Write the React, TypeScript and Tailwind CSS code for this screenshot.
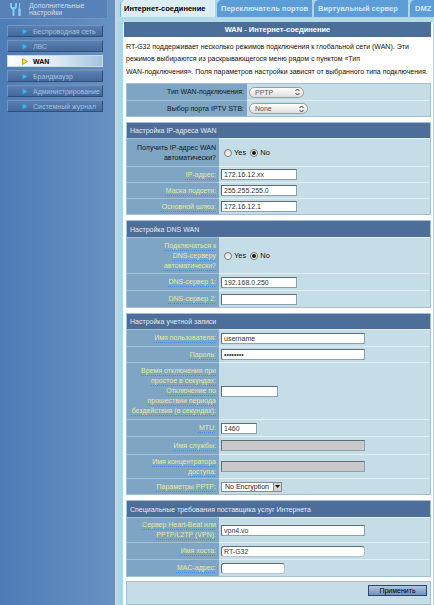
import React from 'react';

type RowProps = {
  label: React.ReactNode;
  h: string;
  lw?: string;
  tip?: boolean;
  first?: boolean;
  children?: React.ReactNode;
};

const Tip = ({ children }: { children: React.ReactNode }) => (
  <span className="text-[#e6eaa2] underline decoration-dotted decoration-[#3d8fe2] underline-offset-[2px]">
    {children}
  </span>
);

const Row = ({ label, h, lw = 'w-[92px]', tip = true, first = false, children }: RowProps) => (
  <div className={`flex ${h}`}>
    <div
      className={`${lw} shrink-0 flex items-center justify-end pr-[3px] text-right leading-[10px] bg-[#7ea5c3] ${
        first ? '' : 'border-t border-[#a3c1d6]'
      } ${tip ? '' : 'text-[#101820]'}`}
    >
      {tip ? <Tip>{label}</Tip> : <span>{label}</span>}
    </div>
    <div
      className={`flex-1 flex items-center pl-[2px] bg-[#c4dde6] ${first ? '' : 'border-t border-[#e3eff3]'}`}
    >
      {children}
    </div>
  </div>
);

const Section = ({ title, h, children }: { title: string; h: string; children: React.ReactNode }) => (
  <div className="mt-[5px] border border-[#a2bfd3]">
    <div className={`${h} flex items-center pl-[3px] bg-[#4c6e98] text-[#e4ebf3]`}>{title}</div>
    {children}
  </div>
);

const Field = ({ w, value, tone = 'white', round = false }: { w: string; value?: string; tone?: 'white' | 'grey'; round?: boolean }) => (
  <div
    className={`${w} h-[11px] flex items-center pl-[2px] border border-[#8d9fb0] border-t-[#5d6b7a] border-l-[#5d6b7a] text-[#333] ${
      tone === 'grey' ? 'bg-[#c9c9c9]' : 'bg-white'
    } ${round ? 'rounded-[3px] border-[#b6c2cc]' : ''}`}
  >
    {value}
  </div>
);

const Radio = ({ checked, label }: { checked?: boolean; label: string }) => (
  <span className="flex items-center gap-[2px] text-[#111]">
    <span className="w-[8px] h-[8px] rounded-full border border-[#7b7b7b] bg-linear-to-b from-[#d8d8d8] to-white flex items-center justify-center">
      {checked && <span className="w-[4px] h-[4px] rounded-full bg-[#1a1a1a]" />}
    </span>
    <span className="text-[7.5px]">{label}</span>
  </span>
);

const Pill = ({ w, value }: { w: string; value: string }) => (
  <div
    className={`${w} h-[11px] flex items-center justify-between pl-[5px] pr-[3px] rounded-full border border-[#9c9c9c] bg-linear-to-b from-white to-[#dedede] text-[#555]`}
  >
    <span>{value}</span>
    <svg width="5" height="8" viewBox="0 0 5 8">
      <path d="M0.5 3 L2.5 1 L4.5 3 M0.5 5 L2.5 7 L4.5 5" fill="none" stroke="#333" strokeWidth="1" />
    </svg>
  </div>
);

const Arrow = ({ active }: { active?: boolean }) => (
  <svg width="6" height="7" viewBox="0 0 6 7" className="shrink-0">
    <path
      d="M0.5 0.5 L5.5 3.5 L0.5 6.5 Z"
      fill={active ? '#f6e41e' : '#3fb4ee'}
      stroke={active ? '#8a7b10' : '#2b8fc9'}
      strokeWidth="0.6"
    />
  </svg>
);

const menu = ['Беспроводная сеть', 'ЛВС', 'WAN', 'Брандмауэр', 'Администрирование', 'Системный журнал'];

export default function App() {
  return (
    <div className="w-[434px] h-[605px] overflow-hidden flex font-['Liberation_Sans',Arial,sans-serif] text-[7px] leading-[9px]">
      {/* sidebar */}
      <aside className="w-[115px] shrink-0 bg-linear-to-r from-[#4d7cb7] to-[#6891c2]">
        <div className="w-[108px] h-[19px] flex items-center gap-[6px] pl-[9px] bg-[#5781b7] border-r border-b border-[#7294c2]">
          <svg width="14" height="14" viewBox="0 0 14 14">
            <path d="M2 1 L2 4 Q2 6.5 4.5 6.5 Q7 6.5 7 4 L7 1" fill="none" stroke="#86d2f5" strokeWidth="1.7" />
            <path d="M4.5 6 L4.5 13" stroke="#86d2f5" strokeWidth="2" strokeLinecap="round" />
            <path d="M10.5 1 L10.5 7" stroke="#86d2f5" strokeWidth="1" />
            <path d="M10.5 7.5 L10.5 13" stroke="#86d2f5" strokeWidth="2.4" strokeLinecap="round" />
          </svg>
          <div className="text-[#d3deeb] leading-[7px]">
            Дополнительные
            <br />
            настройки
          </div>
        </div>
        <nav className="mt-[6px] ml-[7px] w-[96px] flex flex-col gap-[3px]">
          {menu.map((item) =>
            item === 'WAN' ? (
              <div
                key={item}
                className="h-[12px] flex items-center gap-[5px] pl-[14px] bg-linear-to-r from-[#fbfdff] via-[#e2ecf5] to-[#a3c4df] border border-[#c9d9e8]"
              >
                <Arrow active />
                <span className="font-bold text-black">WAN</span>
              </div>
            ) : (
              <div
                key={item}
                className="h-[12px] flex items-center gap-[5px] pl-[14px] bg-linear-to-b from-[#5a7fb0] to-[#44699c] border border-[#2f4e7a] border-t-[#7393c0] border-l-[#7393c0]"
              >
                <Arrow />
                <span className="text-[#a9c1dc]">{item}</span>
              </div>
            )
          )}
        </nav>
      </aside>

      {/* main */}
      <main className="flex-1 flex flex-col bg-[#acd5e7] border-l-2 border-[#c9d7e3]">
        <div className="h-[18px] flex items-end gap-[2px] pl-[3px] bg-[#acd5e7] text-[7.5px] font-bold">
          <div className="w-[95px] h-[17px] flex items-center pl-[3px] rounded-tl-[5px] bg-[#dcedf3] border-l border-[#7fb0d0] text-black">
            Интернет-соединение
          </div>
          <div className="w-[95px] h-[17px] flex items-center pl-[4px] rounded-tl-[5px] bg-[#5d9dd7] text-[#d5e7f6]">
            Переключатель портов
          </div>
          <div className="w-[94px] h-[17px] flex items-center pl-[4px] rounded-tl-[5px] bg-[#5d9dd7] text-[#d5e7f6]">
            Виртуальный сервер
          </div>
          <div className="flex-1 h-[17px] flex items-center pl-[5px] rounded-tl-[5px] bg-[#5d9dd7] text-[#d5e7f6]">
            DMZ
          </div>
        </div>
        <div className="h-[10px] bg-[#b3dae8]" />
        <div className="flex-1 ml-[6px] mr-[1px] bg-white pl-[3px] pr-[2px]">
          <div className="-ml-[2px] h-[15px] flex items-center justify-center bg-[#4b6e98] text-white font-bold text-[7.5px]">
            WAN - Интернет-соединение
          </div>
          <p className="pt-[4px] leading-[12.5px] text-[#111]">
            RT-G32 поддерживает несколько режимов подключения к глобальной сети (WAN). Эти
            <br />
            режимов выбираются из раскрывающегося меню рядом с пунктом «Тип
            <br />
            WAN-подключения». Поля параметров настройки зависят от выбранного типа подключения.
          </p>

          <div className="mt-[5px] border border-[#a2bfd3]">
            <Row label="Тип WAN-подключения:" h="h-[16px]" lw="w-[120px]" tip={false} first>
              <Pill w="w-[55px]" value="PPTP" />
            </Row>
            <Row label="Выбор порта IPTV STB:" h="h-[16px]" lw="w-[120px]" tip={false}>
              <Pill w="w-[59px]" value="None" />
            </Row>
          </div>

          <Section title="Настройка IP-адреса WAN" h="h-[15px]">
            <Row label={<>Получить IP-адрес WAN<br />автоматически?</>} h="h-[28px]" tip={false}>
              <div className="flex items-center gap-[4px] pl-[3px]">
                <Radio label="Yes" />
                <Radio label="No" checked />
              </div>
            </Row>
            <Row label="IP-адрес:" h="h-[16px]">
              <Field w="w-[76px]" value="172.16.12.xx" />
            </Row>
            <Row label="Маска подсети:" h="h-[16px]">
              <Field w="w-[76px]" value="255.255.255.0" />
            </Row>
            <Row label="Основной шлюз:" h="h-[16px]">
              <Field w="w-[76px]" value="172.16.12.1" />
            </Row>
          </Section>

          <Section title="Настройка DNS WAN" h="h-[16px]">
            <Row label={<>Подключаться к<br />DNS-серверу<br />автоматически?</>} h="h-[36px]">
              <div className="flex items-center gap-[4px] pl-[3px]">
                <Radio label="Yes" />
                <Radio label="No" checked />
              </div>
            </Row>
            <Row label="DNS-сервер 1:" h="h-[17px]">
              <Field w="w-[76px]" value="192.168.0.250" />
            </Row>
            <Row label="DNS-сервер 2:" h="h-[17px]">
              <Field w="w-[76px]" />
            </Row>
          </Section>

          <Section title="Настройка учетной записи" h="h-[15px]">
            <Row label="Имя пользователя:" h="h-[17px]">
              <Field w="w-[144px]" value="username" />
            </Row>
            <Row label="Пароль:" h="h-[16px]">
              <Field w="w-[144px]" value="••••••••" />
            </Row>
            <Row
              label={
                <>
                  Время отключения при
                  <br />
                  простое в секундах:
                  <br />
                  Отключение по
                  <br />
                  прошествии периода
                  <br />
                  бездействия (в секундах):
                </>
              }
              h="h-[57px]"
            >
              <Field w="w-[57px]" />
            </Row>
            <Row label="MTU:" h="h-[17px]">
              <Field w="w-[36px]" value="1460" />
            </Row>
            <Row label="Имя службы:" h="h-[18px]">
              <Field w="w-[144px]" tone="grey" />
            </Row>
            <Row label={<>Имя концентратора<br />доступа:</>} h="h-[24px]">
              <Field w="w-[144px]" tone="grey" />
            </Row>
            <Row label="Параметры PPTP:" h="h-[16px]">
              <div className="w-[61px] h-[10px] flex items-center justify-between pl-[3px] border border-[#8a8a8a] bg-white text-[#222]">
                <span>No Encryption</span>
                <span className="w-[8px] h-[8px] flex items-center justify-center bg-[#d6d3cc] border-l border-[#8a8a8a]">
                  <svg width="5" height="3" viewBox="0 0 5 3">
                    <path d="M0 0 L5 0 L2.5 3 Z" fill="#111" />
                  </svg>
                </span>
              </div>
            </Row>
          </Section>

          <Section title="Специальные требования поставщика услуг Интернета" h="h-[16px]">
            <Row label={<>Сервер Heart-Beat или<br />PPTP/L2TP (VPN):</>} h="h-[25px]">
              <Field w="w-[144px]" value="vpn4.vo" />
            </Row>
            <Row label="Имя хоста:" h="h-[17px]">
              <Field w="w-[144px]" value="RT-G32" round />
            </Row>
            <Row label="MAC-адрес:" h="h-[17px]">
              <Field w="w-[64px]" round />
            </Row>
          </Section>

          <div className="mt-[4px] h-[24px] flex justify-end pr-[3px] pt-[3px] bg-[#c4dde6] border border-[#a2bfd3]">
            <div className="w-[59px] h-[11px] flex items-center justify-center bg-linear-to-b from-[#b1c6e0] to-[#6f90bf] border border-[#2e4468] text-black">
              Применить
            </div>
          </div>
        </div>
      </main>
    </div>
  );
}
